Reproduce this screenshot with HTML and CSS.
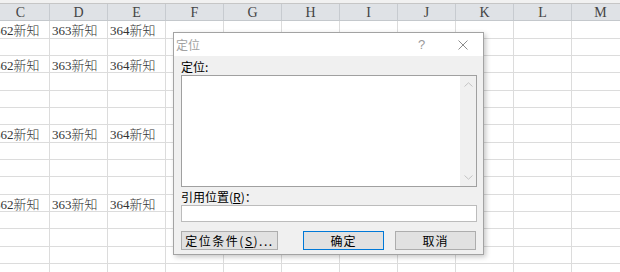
FILE: index.html
```html
<!DOCTYPE html>
<html>

<head>
    <link rel="stylesheet" href="styles.css">
</head>

<body>
    <div class="sheet">
        <div class="topbar"></div>
        <div class="cols">
            <div class="col">C</div>
            <div class="col">D</div>
            <div class="col">E</div>
            <div class="col">F</div>
            <div class="col">G</div>
            <div class="col">H</div>
            <div class="col">I</div>
            <div class="col">J</div>
            <div class="col">K</div>
            <div class="col">L</div>
            <div class="col">M</div>
        </div>
        <div class="rows">
            <div class="row"><span class="cell">362新知</span><span class="cell">363新知</span><span class="cell">364新知</span></div>
            <div class="row"></div>
            <div class="row"><span class="cell">362新知</span><span class="cell">363新知</span><span class="cell">364新知</span></div>
            <div class="row"></div>
            <div class="row"></div>
            <div class="row"></div>
            <div class="row"><span class="cell">362新知</span><span class="cell">363新知</span><span class="cell">364新知</span></div>
            <div class="row"></div>
            <div class="row"></div>
            <div class="row"></div>
            <div class="row"><span class="cell">362新知</span><span class="cell">363新知</span><span class="cell">364新知</span></div>
            <div class="row"></div>
            <div class="row"></div>
            <div class="row"></div>
            <div class="row"></div>
        </div>
    </div>

    <div class="dialog">
        <div class="titlebar">
            <span class="title">定位</span>
            <span class="tb-btn">?</span>
            <span class="tb-btn">
                <svg width="10" height="10" viewBox="0 0 10 10">
                    <path d="M0.5 0.5 L9.5 9.5 M9.5 0.5 L0.5 9.5" stroke="#8c8c8c" stroke-width="1" fill="none" />
                </svg>
            </span>
        </div>
        <div class="dlg-body">
            <label class="lbl">定位:</label>
            <div class="listbox">
                <div class="scroll">
                    <svg width="9" height="5" viewBox="0 0 9 5">
                        <path d="M0.5 4.5 L4.5 0.8 L8.5 4.5" stroke="#c4c4c4" fill="none" />
                    </svg>
                    <svg width="9" height="5" viewBox="0 0 9 5">
                        <path d="M0.5 0.5 L4.5 4.2 L8.5 0.5" stroke="#c4c4c4" fill="none" />
                    </svg>
                </div>
            </div>
            <label class="lbl ref">引用位置(<u>R</u>)：</label>
            <div class="ref-input"></div>
            <div class="buttons">
                <button class="btn special">定位条件(<u>S</u>)...</button>
                <button class="btn ok">确定</button>
                <button class="btn">取消</button>
            </div>
        </div>
    </div>
</body>

</html>
```

FILE: styles.css
```css
body {
    margin: 0;
    width: 620px;
    height: 272px;
    overflow: hidden;
    background: #fff;
    position: relative;
}

.sheet {
    margin-left: -8px;
    width: 638px;
}

.topbar {
    height: 3px;
    background: #f1f1f1;
    border-bottom: 1px solid #c6c6c6;
}

.cols {
    display: flex;
    height: 17.333px;
    background: #dfe2e6;
    border-bottom: 1px solid #c4c8cc;
    box-sizing: border-box;
}

.col {
    width: 58px;
    flex: none;
    box-sizing: border-box;
    border-right: 1px solid #c7cbd0;
    text-align: center;
    font-family: "Liberation Serif", serif;
    font-size: 14px;
    line-height: 17px;
    color: #444;
}

.rows {
    background: repeating-linear-gradient(to right, transparent 0 57px, #dcdcdc 57px 58px);
}

.row {
    display: flex;
    height: 17.333px;
    box-sizing: border-box;
    border-bottom: 1px solid #dcdcdc;
}

.cell {
    width: 58px;
    flex: none;
    padding: 2px 0 0 2px;
    box-sizing: border-box;
    font-family: "Liberation Serif", "Noto Sans CJK SC", serif;
    font-size: 13px;
    font-weight: 300;
    line-height: 15px;
    color: #333;
    white-space: nowrap;
}

.dialog {
    position: absolute;
    left: 173px;
    top: 32px;
    width: 311px;
    height: 223px;
    box-sizing: border-box;
    border: 1px solid #a3a3a3;
    background: #f0f0f0;
    box-shadow: 2px 2px 5px rgba(0, 0, 0, 0.22);
    font-family: "Noto Sans CJK SC", sans-serif;
    font-size: 12px;
    color: #000;
}

.titlebar {
    display: flex;
    align-items: center;
    height: 23px;
    background: #fff;
}

.title {
    flex: 1;
    padding-left: 2px;
    color: #a2a2a2;
}

.tb-btn {
    width: 41px;
    display: flex;
    justify-content: center;
    align-items: center;
    color: #9a9a9a;
    font-family: "Liberation Sans", sans-serif;
    font-size: 13px;
}

.dlg-body {
    padding: 3px 6px 0 7px;
}

.lbl {
    display: block;
    height: 16px;
    line-height: 16px;
}

.listbox {
    height: 112px;
    box-sizing: border-box;
    border: 1px solid #a0a0a0;
    background: #fff;
    display: flex;
    justify-content: flex-end;
}

.scroll {
    width: 16px;
    background: #f0f0f0;
    display: flex;
    flex-direction: column;
    justify-content: space-between;
    align-items: center;
    padding: 6px 0 6px;
}

.ref {
    margin-top: 2px;
}

.ref-input {
    height: 17px;
    box-sizing: border-box;
    border: 1px solid #bcbcbc;
    background: #fff;
}

.buttons {
    display: flex;
    margin-top: 9px;
}

.btn {
    height: 19px;
    width: 81px;
    padding: 0;
    border: 1px solid #adadad;
    background: #e1e1e1;
    font-family: "Noto Sans CJK SC", sans-serif;
    font-size: 12px;
    line-height: 16px;
    letter-spacing: 1px;
    color: #000;
}

.special {
    width: 97px;
    margin-right: 25px;
    letter-spacing: 1.5px;
}

.ok {
    border-color: #0078d7;
    margin-right: 11px;
}
```
